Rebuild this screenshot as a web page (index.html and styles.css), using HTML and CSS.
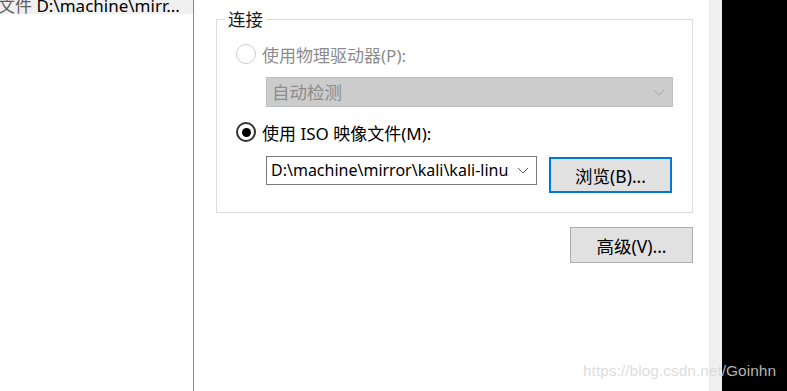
FILE: index.html
```html
<!DOCTYPE html>
<html lang="zh-CN">
<head>
    <meta charset="utf-8">
    <title>CD/DVD 设置</title>
    <link rel="stylesheet" href="styles.css">
</head>
<body>
    <div class="window">
        <div class="devices">
            <div class="device-row">
                <span class="device-name"><span class="device-key">文件</span> D:\machine\mirr...</span>
            </div>
        </div>

        <div class="settings">
            <div class="group">
                <div class="legend">连接</div>

                <div class="option disabled">
                    <span class="radio"></span>
                    <span class="label">使用物理驱动器(P):</span>
                </div>
                <div class="combo combo-disabled">
                    <span class="combo-text">自动检测</span>
                    <svg class="chevron" width="12" height="7" viewBox="0 0 12 7"><polyline points="1,1 6,6 11,1" fill="none" stroke="#a8a8a8" stroke-width="1"/></svg>
                </div>

                <div class="option">
                    <span class="radio checked"></span>
                    <span class="label">使用 ISO 映像文件(M):</span>
                </div>
                <div class="iso-row">
                    <div class="combo combo-iso">
                        <span class="combo-text">D:\machine\mirror\kali\kali-linux-2020.1-installer-amd64.iso</span>
                        <svg class="chevron" width="12" height="7" viewBox="0 0 12 7"><polyline points="1,1 6,6 11,1" fill="none" stroke="#606060" stroke-width="1"/></svg>
                    </div>
                    <button class="btn btn-focus">浏览(B)...</button>
                </div>
            </div>

            <div class="actions">
                <button class="btn">高级(V)...</button>
            </div>
        </div>

        <div class="strip"></div>
        <div class="dark"></div>
    </div>

    <div class="watermark">https://blog.csdn.net/Goinhn</div>
</body>
</html>
```

FILE: styles.css
```css
*{
    box-sizing: border-box;
}
body{
    margin: 0;
    background: #000;
    font-family: "Noto Sans", "Noto Sans CJK SC", sans-serif;
    font-size: 16px;
    color: #000;
    overflow: hidden;
}
.window{
    display: flex;
    height: 391px;
}

/* left device list */
.devices{
    width: 194px;
    background: #fff;
    border-right: 1px solid #8a8a8a;
}
.device-row{
    height: 14px;
    background: #f0f0f0;
    overflow: hidden;
}
.device-name{
    display: block;
    margin-top: -5px;
    margin-left: -2px;
    line-height: 22px;
    font-size: 17px;
    white-space: nowrap;
}
.device-key{
    color: #5f5f5f;
}

/* right settings */
.settings{
    width: 515px;
    background: #fff;
    padding-top: 19px;
    padding-left: 22px;
}
.group{
    width: 477px;
    border: 1px solid #dcdcdc;
    padding: 0 19px 19px 19px;
}
.legend{
    width: fit-content;
    margin-top: -11px;
    margin-left: -11px;
    padding: 0 3px;
    background: #fff;
    line-height: 20px;
    font-size: 17.5px;
    color: #1a1a1a;
}
.option{
    display: flex;
    align-items: center;
    gap: 6px;
    height: 24px;
    margin-top: 13px;
}
.label{
    font-size: 17px;
}
.radio{
    width: 20px;
    height: 20px;
    border-radius: 50%;
    border: 1px solid #cccccc;
    background: #fff;
    display: flex;
    align-items: center;
    justify-content: center;
}
.radio.checked{
    border: 2px solid #333;
}
.radio.checked::after{
    content: "";
    width: 9px;
    height: 9px;
    border-radius: 50%;
    background: #000;
}
.disabled .label{
    color: #8c8c8c;
}

.combo{
    display: flex;
    align-items: center;
    margin-left: 30px;
    padding: 0 7px 0 5px;
}
.combo-text{
    flex: 1;
    overflow: hidden;
    white-space: nowrap;
    line-height: 25px;
}
.chevron{
    margin-left: 8px;
    flex-shrink: 0;
}
.combo-disabled{
    width: 407px;
    height: 30px;
    margin-top: 11px;
    background: #cccccc;
    border: 1px solid #bfbfbf;
}
.combo-disabled .combo-text{
    color: #8d8d8d;
    font-size: 17.5px;
}
.combo-iso{
    width: 271px;
    height: 29px;
    border: 1px solid #7a7a7a;
    background: #fff;
    padding-left: 4px;
}

.iso-row{
    display: flex;
    align-items: flex-start;
    gap: 12px;
    margin-top: 12px;
}
.iso-row .btn{
    margin-top: 1px;
}

.btn{
    width: 123px;
    height: 36px;
    background: #e1e1e1;
    border: 1px solid #adadad;
    font-family: inherit;
    font-size: 17.5px;
    color: #000;
    padding: 0;
}
.btn-focus{
    border: 2px solid #0078d7;
}
.actions{
    width: 477px;
    display: flex;
    justify-content: flex-end;
    margin-top: 14px;
}

.strip{
    width: 13px;
    background: #f0f0f0;
}
.dark{
    flex: 1;
    background: #000;
}

.watermark{
    position: absolute;
    left: 583px;
    top: 362px;
    font-family: "Liberation Sans", Arial, sans-serif;
    font-size: 15.5px;
    color: rgba(215, 215, 215, 0.85);
    white-space: nowrap;
}
```
